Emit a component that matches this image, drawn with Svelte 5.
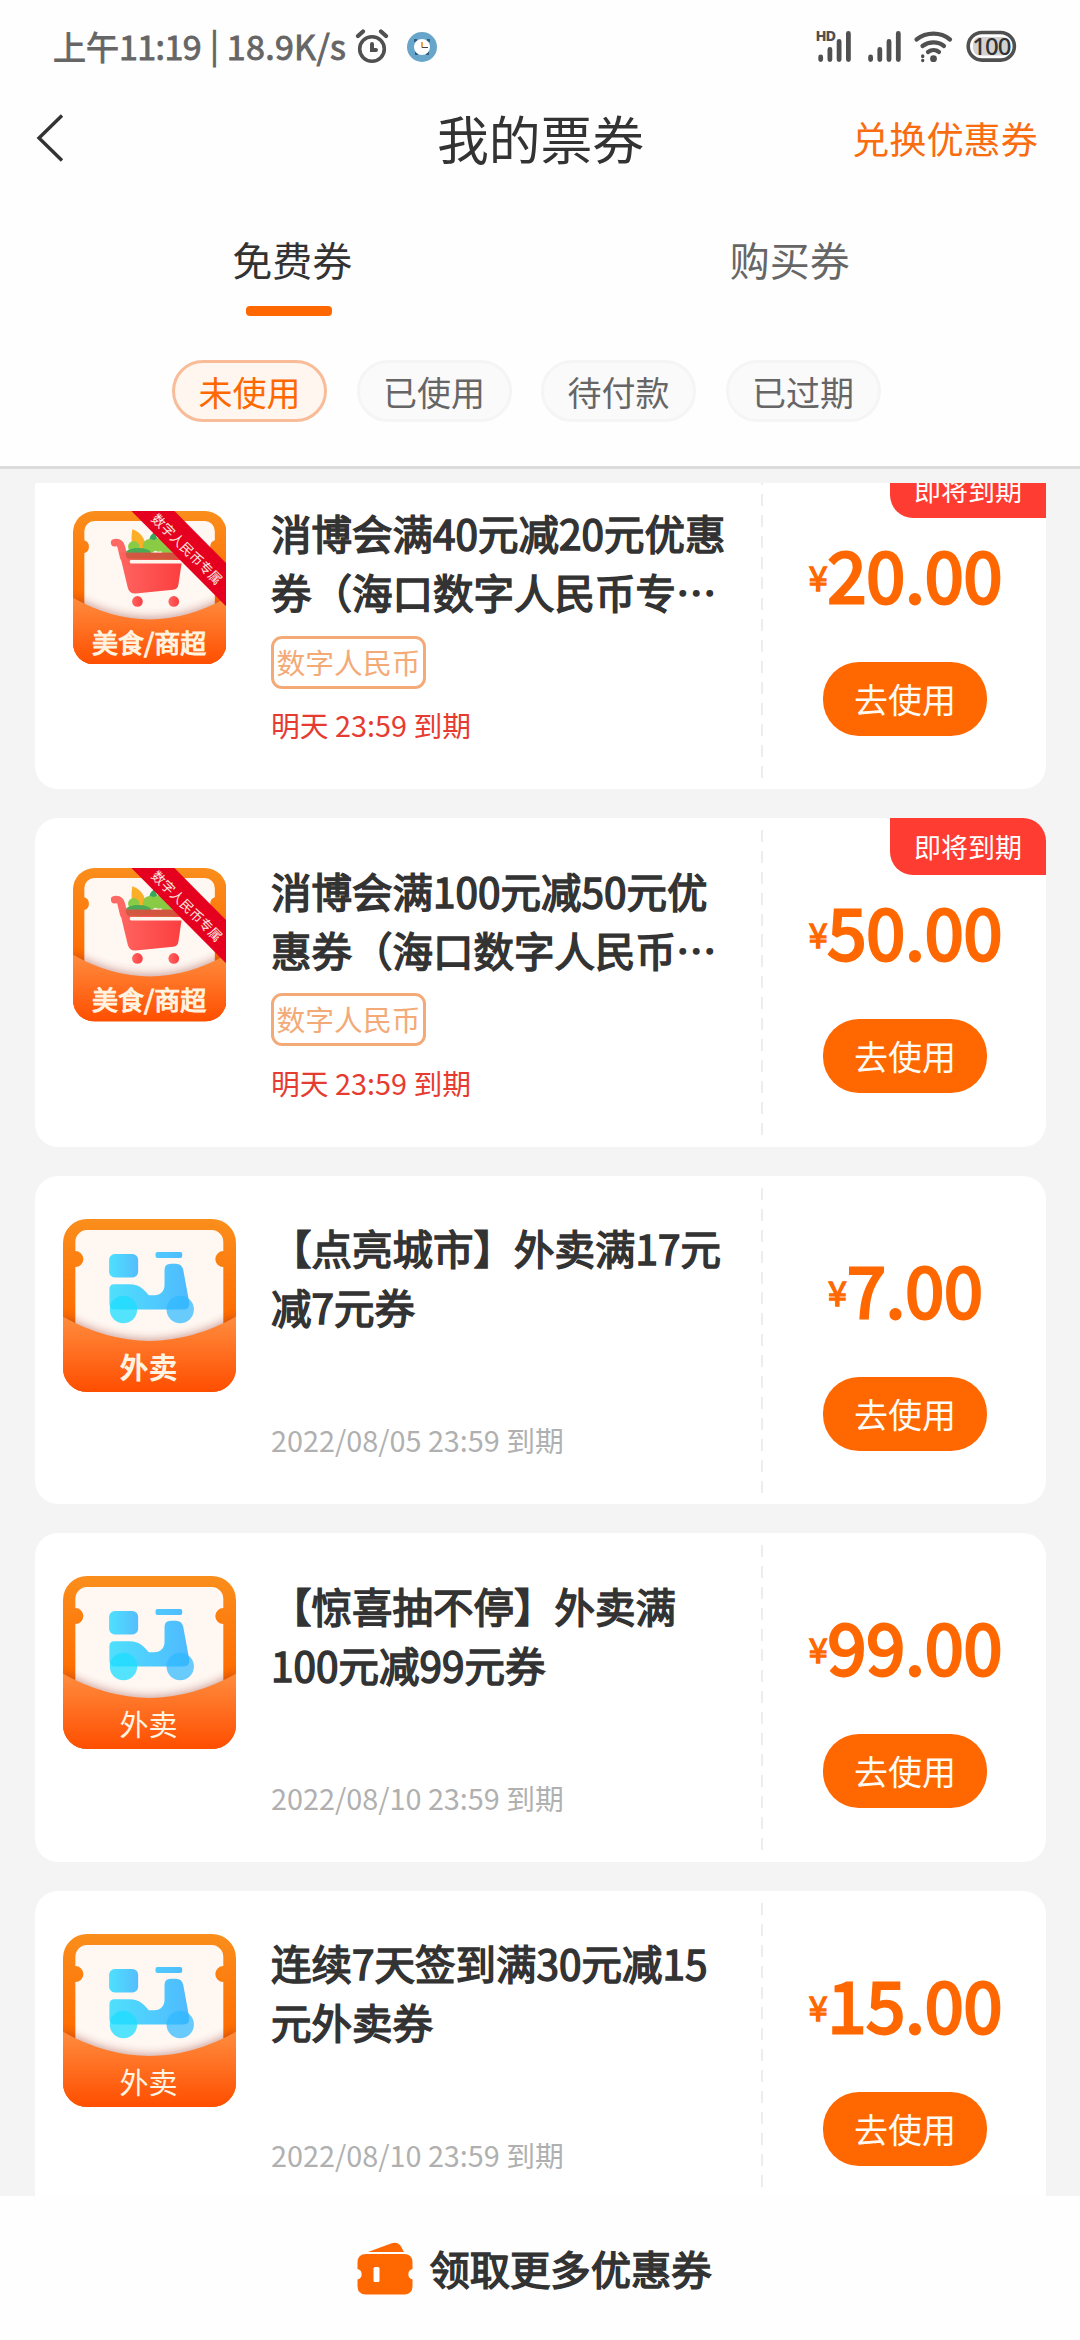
<script>
  const filters = ['未使用', '已使用', '待付款', '已过期'];
  const coupons = [
    { kind: 'food', lines: ['消博会满40元减20元优惠', '券（海口数字人民币专…'], tag: '数字人民币', expiry: '明天 23:59 到期', soon: true, price: '20.00' },
    { kind: 'food', lines: ['消博会满100元减50元优', '惠券（海口数字人民币…'], tag: '数字人民币', expiry: '明天 23:59 到期', soon: true, price: '50.00' },
    { kind: 'ride', strong: true, lines: ['【点亮城市】外卖满17元', '减7元券'], expiry: '2022/08/05 23:59 到期', price: '7.00' },
    { kind: 'ride', lines: ['【惊喜抽不停】外卖满', '100元减99元券'], expiry: '2022/08/10 23:59 到期', price: '99.00' },
    { kind: 'ride', lines: ['连续7天签到满30元减15', '元外卖券'], expiry: '2022/08/10 23:59 到期', price: '15.00' }
  ];
</script>

<svg class="defs" width="0" height="0" aria-hidden="true">
  <defs>
    <linearGradient id="back" x1="0" y1="0" x2="0" y2="1"><stop offset="0" stop-color="#fa8e1c" /><stop offset=".6" stop-color="#ff6a00" /></linearGradient>
    <linearGradient id="pocket" x1="0" y1="0" x2="0" y2="1"><stop offset="0" stop-color="#ff8c3e" /><stop offset="1" stop-color="#ff4e00" /></linearGradient>
    <linearGradient id="cyan" gradientUnits="userSpaceOnUse" x1="177" y1="0" x2="420" y2="0"><stop offset="0" stop-color="#4fe0fc" /><stop offset="1" stop-color="#4fb9ff" /></linearGradient>
    <linearGradient id="box" x1="0" y1="0" x2="1" y2="0"><stop offset="0" stop-color="#4de1fd" /><stop offset="1" stop-color="#55bdfd" /></linearGradient>
    <linearGradient id="red" x1="0" y1="0" x2="1" y2="0"><stop offset="0" stop-color="#ff6560" /><stop offset="1" stop-color="#fb3d3f" /></linearGradient>
    <filter id="soft" x="-20%" y="-30%" width="140%" height="160%"><feGaussianBlur stdDeviation="12" /></filter>
    <clipPath id="rideclip"><rect x="39" y="57" width="518" height="518" rx="72" /></clipPath>
    <clipPath id="foodclip"><rect x="68" y="53" width="460" height="460" rx="64" /></clipPath>
  </defs>
</svg>

<div class="screen">
  <div class="status">
    <div class="st-left">
      <span class="clock">上午<b>11:19</b><i>|</i><b class="net">18.9K/s</b></span>
      <svg class="alarm" viewBox="0 0 34 36" fill="none" stroke="#505050" stroke-width="3.600" stroke-linecap="round">
        <circle cx="17" cy="20" r="12.300" /><path d="M3 7l5-4.500M31 7l-5-4.500" stroke-width="4.200" /><path d="M17 15v6h4" stroke-width="4" />
      </svg>
      <svg class="blue" viewBox="0 0 30 30">
        <circle cx="15" cy="15" r="15" fill="#68a5ca" /><path d="M7 7h3v3H7zM20 7h3v3h-3zM8 20h3v3H8zM19 20h3v3h-3z" fill="#315d7b" /><circle cx="15" cy="15" r="8" fill="#fff" /><path d="M15 10v5.500" stroke="#e8a04c" stroke-width="2" /><path d="M15 15.500h6" stroke="#444" stroke-width="1" />
      </svg>
    </div>
    <svg class="st-right" viewBox="812 26 208 40" fill="none" stroke="#505050" stroke-linecap="round" stroke-width="4.800">
      <text class="hd" x="814.500" y="40.500">HD</text>
      <path d="M819.700 57v2.500M828.900 49.500v10M838.100 41.500v18M847.400 33.500v26M869.600 57v2.500M878.800 49.500v10M888 41.500v18M897.300 33.500v26" />
      <path d="M915.500 39.500c10-7.700 24-7.700 33.500 0M921.500 46c6.500-4.800 15.500-4.800 21.500 0M927 52c3.400-2.500 7.800-2.500 11 0" stroke-width="4.200" />
      <circle cx="932.500" cy="58.700" r="3.400" fill="#505050" stroke="none" />
      <path d="M921.700 56v.5M921.700 60.400v.1" stroke-width="3.400" />
      <rect x="967.200" y="32.500" width="46.200" height="27.600" rx="13.800" stroke-width="3.600" />
      <rect x="972" y="37" width="36.600" height="18.600" rx="7" fill="#d2d2d2" stroke="none" />
      <text class="pct" x="990.400" y="55">100</text>
    </svg>
  </div>

  <nav class="nav">
    <svg class="chev" viewBox="0 0 28 48" fill="none" stroke="#333" stroke-width="3.400"><path d="M26 1.500L3 24l23 22.500" /></svg>
    <h1>我的票券</h1>
    <span class="redeem">兑换优惠券</span>
  </nav>

  <div class="tabs">
    <div class="tab on"><span>免费券</span></div>
    <div class="tab"><span>购买券</span></div>
  </div>

  <div class="filters">
    {#each filters as f, i}<span class="pill" class:active={i === 0}>{f}</span>{/each}
  </div>

  <main class="list">
    <div class="stack">
      {#each coupons as c}
        <article class="card">
          <div class="pic">
            {#if c.kind === 'food'}
              <svg class="food" viewBox="68 53 460 460">
                <g clip-path="url(#foodclip)">
                  <rect x="68" y="53" width="460" height="460" fill="url(#back)" />
                  <path d="M102 400V179a20 20 0 0 0 0-38V113a30 30 0 0 1 30-30H463a30 30 0 0 1 30 30v28a20 20 0 0 0 0 38V400z" fill="#fff7f2" />
                  <path d="M68 307Q298 435 528 307V513H68z" fill="#8a2a20" opacity=".4" filter="url(#soft)" />
                  <path d="M246 108c24 8 40 28 40 58l-34 8c-10-20-10-44-6-66z" fill="#fbae28" />
                  <path d="M296 148c0-18 8-28 18-32 2 16 8 24 20 30z" fill="#35a85c" />
                  <g fill="#8acb46"><circle cx="250" cy="160" r="17" /><circle cx="298" cy="158" r="21" /><circle cx="325" cy="155" r="20" /><circle cx="350" cy="165" r="20" /></g>
                  <ellipse cx="264" cy="178" rx="38" ry="14" fill="#4aa955" />
                  <path d="M193 148c14-2 17 2 20 14l7 29" fill="none" stroke="#ff6963" stroke-width="23" stroke-linecap="round" />
                  <path d="M207 178H398L384 273q-2 14-16 16L256 300q-20 1-24-18z" fill="url(#red)" />
                  <path d="M226 178h171v18H232q-7-6-6-18z" fill="#c9573d" opacity=".85" />
                  <path d="M246 198q12 5 26 0zM308 198q32 12 64 0z" fill="#a98b35" />
                  <rect x="238" y="200" width="160" height="10" rx="4" fill="#fff5ef" />
                  <circle cx="261" cy="324" r="16" fill="url(#red)" /><circle cx="370" cy="324" r="16" fill="url(#red)" />
                  <path d="M68 313Q298 443 528 313V513H68z" fill="url(#pocket)" />
                  <path d="M243 53H372L528 210V340z" fill="#e50020" />
                  <text class="ribbon" transform="translate(409 168) rotate(45)" y="14">数字人民币专属</text>
                  <text class="foodtext" x="296" y="478">美食/商超</text>
                </g>
              </svg>
            {:else}
              <svg class="ride" viewBox="39 57 518 518">
                <g clip-path="url(#rideclip)">
                  <rect x="39" y="57" width="518" height="518" fill="url(#back)" />
                  <path d="M76 440V201a24 24 0 0 0 0-48V125a35 35 0 0 1 35-35H484a35 35 0 0 1 35 35v28a24 24 0 0 0 0 48V440z" fill="#fff7f2" />
                  <path d="M39 344Q298 488 557 344V575H39z" fill="#8a2a20" opacity=".4" filter="url(#soft)" />
                  <rect x="177" y="162" width="87" height="70" rx="17" fill="url(#box)" />
                  <rect x="316" y="156" width="80" height="18" rx="6" fill="url(#cyan)" />
                  <path d="M178 267q0-15 15-15h45c31 0 44 17 58 33h16c20 0 31-12 31-31V210q0-19 19-19h15q18 0 22 18l18 98q2 21-18 21H195q-17 0-17-18z" fill="url(#cyan)" />
                  <circle cx="220" cy="328" r="41" fill="#1bdcff" opacity=".75" /><circle cx="390" cy="328" r="41" fill="#2fb8ff" opacity=".72" />
                  <path d="M39 350Q298 494 557 350V575H39z" fill="url(#pocket)" />
                  <text class="ridetext" class:strong={c.strong} x="295" y="536">外卖</text>
                </g>
              </svg>
            {/if}
          </div>
          <div class="info">
            <h2>{#each c.lines as l}<span>{l}</span>{/each}</h2>
            {#if c.tag}<span class="tag">{c.tag}</span>{/if}
            <p class:urgent={c.soon}>{c.expiry}</p>
          </div>
          <div class="perf"></div>
          <div class="buy">
            <div class="price"><small>¥</small>{c.price}</div>
            <button>去使用</button>
          </div>
          {#if c.soon}<span class="badge">即将到期</span>{/if}
        </article>
      {/each}
    </div>
  </main>

  <footer>
    <svg viewBox="0 0 56 53" fill="#ff6700">
      <path d="M11 10L34 1.500q7-2.500 10 3l3 5.500z" />
      <path d="M9 12H47q8.500 0 8.500 8.500v6.500a5.400 5.400 0 0 0 0 10.500V44q0 8.500-8.500 8.500H9Q.5 52.500.5 44v-6.500a5.400 5.400 0 0 0 0-10.500v-6.500Q.5 12 9 12z" />
      <rect x="16.500" y="25" width="6" height="15" rx="1.500" fill="#fff" />
    </svg>
    <span>领取更多优惠券</span>
  </footer>
</div>

<style>
  :global(body) { margin: 0; background: #fefefe; }
  .defs { position: absolute; }
  .screen { width: 1080px; height: 2340px; overflow: hidden; display: flex; flex-direction: column; background: #fefefe; color: #333; font-family: 'Noto Sans CJK SC', 'Noto Sans', sans-serif; text-spacing-trim: space-all; }
  .status { height: 93px; flex: none; display: flex; justify-content: space-between; box-sizing: border-box; padding: 0 59px 0 53px; }
  .st-left { display: flex; align-items: center; height: 93px; }
  .clock { display: flex; font-size: 33px; line-height: 48px; margin-top: -1px; color: #666; -webkit-text-stroke: .9px #666; width: 301px; white-space: nowrap; }
  .clock b { font-weight: 400; font-size: 34px; letter-spacing: -.6px; }
  .clock .net { letter-spacing: .3px; }
  .clock i { font-style: normal; margin: -2px 8px 0 9px; }
  .alarm { width: 34px; height: 36px; margin-left: 1px; }
  .blue { width: 30px; height: 30px; margin-left: 18px; }
  .st-right { width: 208px; height: 40px; margin-top: 26px; }
  .hd { font: 800 14.500px 'Noto Sans', sans-serif; fill: #505050; stroke: none; letter-spacing: -1px; }
  .pct { font: 500 24px 'Noto Sans', sans-serif; fill: #333; stroke: none; text-anchor: middle; letter-spacing: -1px; }
  .nav { height: 93px; flex: none; display: grid; grid-template-columns: 1fr auto 1fr; align-items: center; padding: 0 42px 0 36px; margin-bottom: 3px; box-sizing: border-box; }
  .chev { width: 28px; height: 48px; margin-top: -3px; }
  h1 { margin: -4px 0 0 7px; font-size: 51.800px; line-height: 90px; font-weight: 400; }
  .redeem { justify-self: end; margin-top: -3px; font-size: 37.200px; line-height: 60px; color: #f96c10; }
  .tabs { height: 171px; flex: none; display: flex; box-sizing: border-box; padding: 39.500px 41.500px 0 43.500px; font-size: 40px; line-height: 60px; }
  .tab { flex: 1; text-align: center; color: #666; }
  .tab.on { color: #333; }
  .tab.on::after { content: ''; display: block; width: 86px; height: 9.500px; border-radius: 4px; background: #ff6700; margin: 17.500px auto 0; transform: translateX(-3px); }
  .filters { height: 109px; flex: none; box-sizing: border-box; padding-left: 172px; display: flex; gap: 29.500px; border-bottom: 3px solid #dcdcdc; }
  .pill { width: 155px; height: 62px; box-sizing: border-box; border: 3px solid #f5f5f5; border-radius: 31px; background: #fafafa; color: #666; font-size: 34px; line-height: 57px; text-align: center; white-space: nowrap; }
  .pill.active { background: #fff6ef; border-color: #f8bc98; color: #ff6700; }
  .list { flex: 1; min-height: 0; background: #f4f4f4; padding: 14px 34px 0 34.500px; display: flex; }
  .stack { flex: 1; overflow: hidden; display: flex; flex-direction: column; gap: 29px; }
  .card { position: relative; flex: none; height: 328.500px; background: #fff; border-radius: 23px; overflow: hidden; display: grid; grid-template-columns: 236.500px 490px 2px 1fr; }
  .card:first-child { margin-top: -22.500px; }
  .pic { display: flex; flex-direction: column; align-items: center; padding-right: 7px; }
  .food { width: 153.500px; height: 153.500px; margin-top: 50px; }
  .ride { width: 173px; height: 173px; margin-top: 43px; }
  .ribbon { font-size: 40px; fill: #ffe9df; text-anchor: middle; }
  .foodtext { font-size: 78px; fill: #fff4e2; text-anchor: middle; stroke: #fff4e2; stroke-width: 3.200; }
  .ridetext { font-size: 87px; fill: #fff4e2; text-anchor: middle; }
  .ridetext.strong { font-weight: 700; }
  .info { display: flex; flex-direction: column; align-items: flex-start; padding: 42.500px 0 43px; }
  h2 { margin: 0; font-size: 40.500px; font-weight: 400; line-height: 59.300px; -webkit-text-stroke: 1.500px #333; white-space: nowrap; }
  h2 span { display: block; }
  .tag { box-sizing: border-box; width: 155px; height: 53px; margin-top: 14px; border: 3px solid #f3aa76; border-radius: 11px; color: #f3aa76; font-size: 28.800px; line-height: 46px; text-align: center; white-space: nowrap; }
  p { margin: auto 0 0; font-size: 28.800px; line-height: 42px; color: #b0b0b0; white-space: pre; }
  p.urgent { color: #e63b30; }
  .perf { margin: 12px 0 11px; background: repeating-linear-gradient(#ededed 0 12px, transparent 12px 20.900px); }
  .buy { display: flex; flex-direction: column; align-items: center; padding-top: 72px; }
  .price { height: 80px; line-height: 80px; padding-left: 2px; font-size: 70px; color: #ff6700; -webkit-text-stroke: 2.800px #ff6700; white-space: nowrap; }
  .price small { font-size: 34px; line-height: 1; vertical-align: 12px; -webkit-text-stroke-width: 1.300px; }
  button { margin: 49.300px 0 0 1px; width: 164px; height: 74px; padding: 0; border: 0; border-radius: 36px; background: #ff6700; color: #fffaf4; font: inherit; font-size: 34px; line-height: 74px; }
  .badge { position: absolute; top: 0; right: 0; width: 156px; height: 57px; border-radius: 0 0 0 23px; background: #ff3c31; color: #fff; font-size: 27px; line-height: 58px; text-align: center; }
  footer { height: 144px; flex: none; display: flex; align-items: center; justify-content: center; gap: 16px; box-sizing: border-box; padding-right: 11px; background: #fefefe; font-size: 40.300px; -webkit-text-stroke: 1.500px #333; }
  footer svg { width: 56px; height: 53px; stroke: none; }
  footer span { line-height: 60px; }
</style>
